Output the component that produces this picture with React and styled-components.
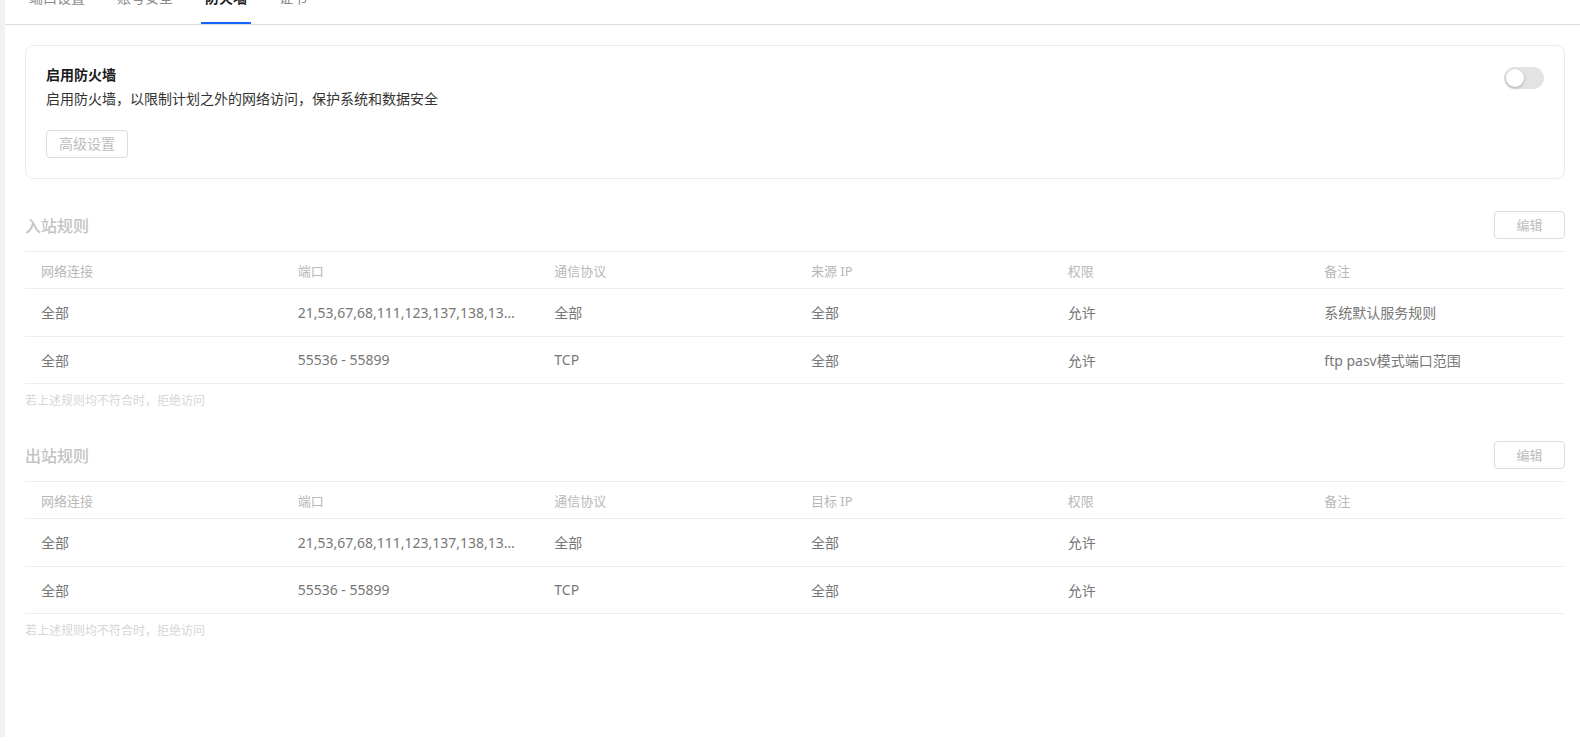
import React from "react";
import styled, { createGlobalStyle } from "styled-components";

const Global = createGlobalStyle`
  html, body { margin: 0; padding: 0; background: #fff; }
  body {
    font-family: "Noto Sans", "Noto Sans CJK SC", sans-serif;
    font-size: 14px;
    color: #333;
    overflow: hidden;
  }
  * { box-sizing: border-box; }
`;

const Shell = styled.div`
  display: flex;
  width: 1580px;
  height: 743px;
  overflow: hidden;
`;

const Rail = styled.div`
  flex: 0 0 5px;
  height: 737px;
  background: #f0f1f4;
`;

const Main = styled.div`
  flex: 1;
  min-width: 0;
  display: flex;
  flex-direction: column;
`;

const TabBar = styled.div`
  display: flex;
  gap: 24px;
  margin-top: -13px;
  padding: 0 20px;
  border-bottom: 1px solid #dcdde0;
`;

const Tab = styled.div`
  padding: 0 4px 13px;
  line-height: 22px;
  font-size: 14px;
  color: ${(p) => (p.$active ? "#1f1f1f" : "#8a8a8a")};
  font-weight: ${(p) => (p.$active ? 600 : 400)};
  border-bottom: 2px solid ${(p) => (p.$active ? "#1664ff" : "transparent")};
`;

const Content = styled.div`
  padding: 20px 15px 0 20px;
  display: flex;
  flex-direction: column;
`;

const Card = styled.div`
  border: 1px solid #ebebeb;
  border-radius: 8px;
  padding: 18px 20px 20px;
  display: flex;
  justify-content: space-between;
  align-items: flex-start;
`;

const CardBody = styled.div`
  display: flex;
  flex-direction: column;
`;

const CardTitle = styled.div`
  font-size: 14px;
  line-height: 22px;
  font-weight: 700;
  color: #1a1a1a;
`;

const CardDesc = styled.div`
  font-size: 14px;
  line-height: 26px;
  color: #333;
`;

const GhostButton = styled.button`
  font-family: inherit;
  font-size: 14px;
  line-height: 20px;
  color: #bdbdbd;
  background: #fff;
  border: 1px solid #dcdcdc;
  border-radius: 4px;
  padding: 3px 12px;
  height: 28px;
  cursor: not-allowed;
`;

const AdvButton = styled(GhostButton)`
  margin-top: 18px;
  align-self: flex-start;
`;

const EditButton = styled(GhostButton)`
  width: 71px;
  font-size: 13px;
`;

const Switch = styled.div`
  margin-top: 3px;
  width: 40px;
  height: 22px;
  border-radius: 11px;
  background: #e3e3e3;
  padding: 2px;
  display: flex;
`;

const Knob = styled.div`
  width: 18px;
  height: 18px;
  border-radius: 50%;
  background: #fff;
  box-shadow: 0 1px 3px rgba(0, 0, 0, 0.25);
`;

const Section = styled.div`
  margin-top: 32px;
  display: flex;
  flex-direction: column;
`;

const SectionHead = styled.div`
  display: flex;
  justify-content: space-between;
  align-items: center;
  height: 28px;
  margin-bottom: 12px;
`;

const SectionTitle = styled.div`
  font-size: 16px;
  font-weight: 500;
  color: #c4c4c4;
`;

const Table = styled.div`
  border-top: 1px solid #eeeeee;
`;

const Row = styled.div`
  display: grid;
  grid-template-columns: repeat(6, minmax(0, 1fr));
  height: ${(p) => (p.$head ? "37px" : "47.5px")};
  align-items: center;
  border-bottom: 1px solid #eeeeee;
`;

const Cell = styled.div`
  min-width: 0;
  padding: 0 16px;
  font-size: ${(p) => (p.$head ? "13px" : "14px")};
  color: ${(p) => (p.$head ? "#b8b8b8" : "#777777")};
  white-space: nowrap;
  overflow: hidden;
  text-overflow: ellipsis;
`;

const Note = styled.div`
  margin-top: 9px;
  font-size: 12px;
  line-height: 16px;
  color: #d6d6d6;
`;

const PORTS = "21,53,67,68,111,123,137,138,139,161,162,389,445,548,5353";

const inbound = [
  ["全部", PORTS, "全部", "全部", "允许", "系统默认服务规则"],
  ["全部", "55536 - 55899", "TCP", "全部", "允许", "ftp pasv模式端口范围"],
];
const outbound = [
  ["全部", PORTS, "全部", "全部", "允许", ""],
  ["全部", "55536 - 55899", "TCP", "全部", "允许", ""],
];

function RuleSection({ title, ipLabel, rows }) {
  const head = ["网络连接", "端口", "通信协议", ipLabel, "权限", "备注"];
  return (
    <Section>
      <SectionHead>
        <SectionTitle>{title}</SectionTitle>
        <EditButton>编辑</EditButton>
      </SectionHead>
      <Table>
        <Row $head>
          {head.map((h) => (
            <Cell $head key={h}>{h}</Cell>
          ))}
        </Row>
        {rows.map((r, i) => (
          <Row key={i}>
            {r.map((c, j) => (
              <Cell key={j}>{c}</Cell>
            ))}
          </Row>
        ))}
      </Table>
      <Note>若上述规则均不符合时，拒绝访问</Note>
    </Section>
  );
}

export default function App() {
  return (
    <>
      <Global />
      <Shell>
        <Rail />
        <Main>
          <TabBar>
            <Tab>端口设置</Tab>
            <Tab>账号安全</Tab>
            <Tab $active>防火墙</Tab>
            <Tab>证书</Tab>
          </TabBar>
          <Content>
            <Card>
              <CardBody>
                <CardTitle>启用防火墙</CardTitle>
                <CardDesc>启用防火墙，以限制计划之外的网络访问，保护系统和数据安全</CardDesc>
                <AdvButton>高级设置</AdvButton>
              </CardBody>
              <Switch>
                <Knob />
              </Switch>
            </Card>
            <RuleSection title="入站规则" ipLabel="来源 IP" rows={inbound} />
            <RuleSection title="出站规则" ipLabel="目标 IP" rows={outbound} />
          </Content>
        </Main>
      </Shell>
    </>
  );
}
